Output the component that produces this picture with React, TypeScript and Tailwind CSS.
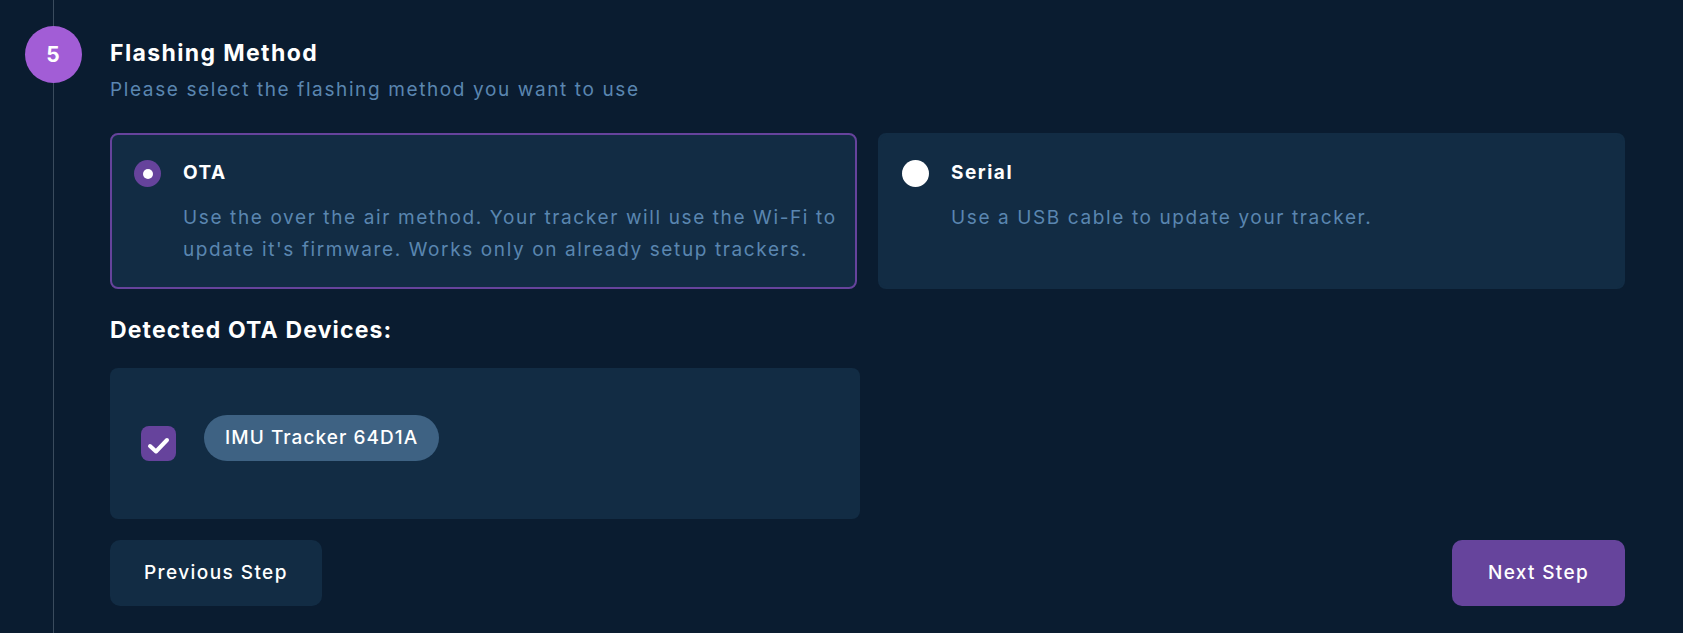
import { useState } from "react";

const font = { fontFamily: "Inter, 'Noto Sans', sans-serif" };

const MethodCard = ({
  title,
  description,
  selected,
  onClick,
}: {
  title: string;
  description: string[];
  selected: boolean;
  onClick: () => void;
}) => (
  <div
    onClick={onClick}
    className={`flex gap-[22px] rounded-lg border-2 bg-[#122c44] pl-[22px] pt-[24px] pb-[21px] cursor-pointer ${
      selected ? "border-[#66439c]" : "border-[#122c44]"
    }`}
  >
    {selected ? (
      <div className="mt-[1px] flex h-[27px] w-[27px] shrink-0 items-center justify-center rounded-full bg-[#66439c]">
        <div className="h-[10px] w-[10px] rounded-full bg-white" />
      </div>
    ) : (
      <div className="mt-[1px] h-[27px] w-[27px] shrink-0 rounded-full bg-white" />
    )}
    <div className="flex flex-col">
      <div className="text-[19px] font-bold leading-[28px] tracking-[0.08em] text-white">{title}</div>
      <div className="mt-[15px] text-[19px] leading-[32px] tracking-[0.085em] text-[#5a86b0]">
        {description.map((line) => (
          <div key={line}>{line}</div>
        ))}
      </div>
    </div>
  </div>
);

export default function App() {
  const [method, setMethod] = useState<"ota" | "serial">("ota");
  const [checked, setChecked] = useState(true);

  return (
    <div style={font} className="flex h-[633px] w-full overflow-hidden bg-[#0a1c30] pl-[25px]">
      {/* step marker */}
      <div className="flex w-[56px] shrink-0 flex-col items-center">
        <div className="h-[26px] w-px bg-[#3a4b5d]" />
        <div className="flex h-[57px] w-[57px] shrink-0 items-center justify-center rounded-full bg-[#a25dd6] text-[21px] font-bold text-white">
          5
        </div>
        <div className="w-px flex-1 bg-[#3a4b5d]" />
      </div>

      <div className="ml-[29px] flex flex-1 flex-col pr-[58px] pt-[38px]">
        <h2 className="text-[23px] font-bold leading-[30px] tracking-[0.06em] text-white">Flashing Method</h2>
        <p className="mt-[8px] text-[19px] leading-[28px] tracking-[0.085em] text-[#5a86b0]">
          Please select the flashing method you want to use
        </p>

        <div className="mt-[29px] grid grid-cols-2 gap-[21px]">
          <MethodCard
            title="OTA"
            description={[
              "Use the over the air method. Your tracker will use the Wi-Fi to",
              "update it's firmware. Works only on already setup trackers.",
            ]}
            selected={method === "ota"}
            onClick={() => setMethod("ota")}
          />
          <MethodCard
            title="Serial"
            description={["Use a USB cable to update your tracker."]}
            selected={method === "serial"}
            onClick={() => setMethod("serial")}
          />
        </div>

        <h3 className="mt-[26px] text-[23px] font-bold leading-[30px] tracking-[0.05em] text-white">
          Detected OTA Devices:
        </h3>

        <div className="mt-[23px] flex h-[151px] w-[750px] items-start gap-[28px] rounded-lg bg-[#122c44] pl-[31px] pt-[47px]">
          <button
            onClick={() => setChecked(!checked)}
            className="mt-[11px] flex h-[35px] w-[35px] items-center justify-center rounded-lg bg-[#66439c]"
          >
            {checked && (
              <svg width="35" height="35" viewBox="0 0 35 35" fill="none">
                <path
                  d="M9 20l6 5.5L26 14"
                  stroke="white"
                  strokeWidth="4"
                  strokeLinecap="round"
                  strokeLinejoin="round"
                />
              </svg>
            )}
          </button>
          <div className="flex h-[46px] items-center rounded-full bg-[#3e6283] px-[21px] text-[19px] font-medium tracking-[0.056em] text-white">
            IMU Tracker 64D1A
          </div>
        </div>

        <div className="mt-[21px] flex justify-between">
          <button className="h-[66px] rounded-[10px] bg-[#122c44] px-[34px] text-[19px] font-medium tracking-[0.075em] text-white">
            Previous Step
          </button>
          <button className="h-[66px] rounded-[10px] bg-[#66449c] px-[36px] text-[19px] font-medium tracking-[0.07em] text-white">
            Next Step
          </button>
        </div>
      </div>
    </div>
  );
}
